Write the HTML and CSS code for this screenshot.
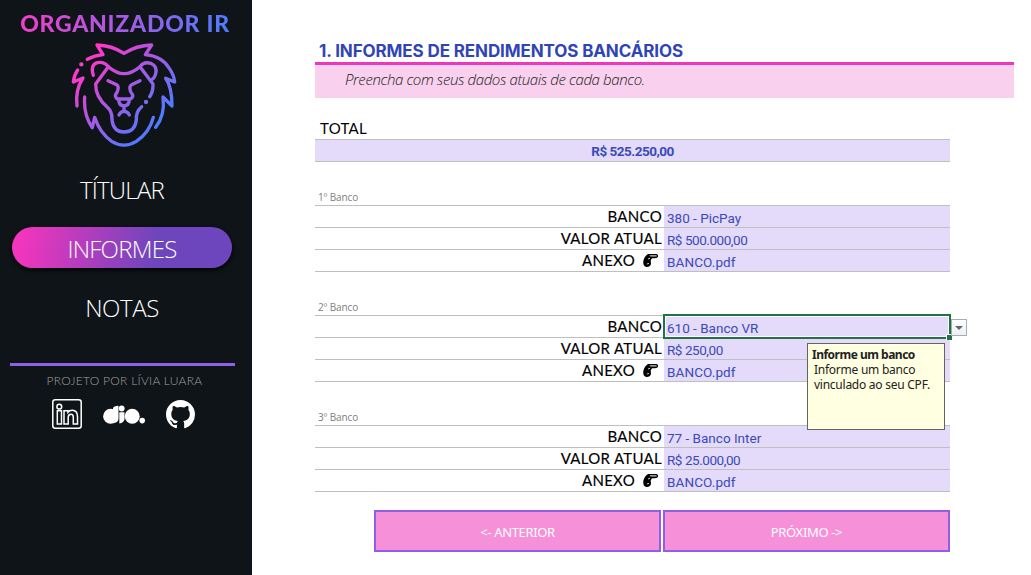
FILE: index.html
```html
<!DOCTYPE html>
<html lang="pt-BR">
<head>
<meta charset="utf-8">
<title>Organizador IR</title>
<link rel="stylesheet" href="styles.css">
</head>
<body>
<div class="app">
  <aside class="sidebar">
    <div class="brand">ORGANIZADOR IR</div>
    <svg class="lion" viewBox="204 114 336 336" fill="none" stroke="url(#mane)" stroke-width="10" stroke-linecap="round" stroke-linejoin="round">
      <defs>
        <linearGradient id="mane" gradientUnits="userSpaceOnUse" x1="265" y1="175" x2="475" y2="375">
          <stop offset="0" stop-color="#ff38c8"/>
          <stop offset=".5" stop-color="#a35be5"/>
          <stop offset="1" stop-color="#4b7dff"/>
        </linearGradient>
      </defs>
      <path d="M262 178Q284 166 309 164L291 135Q335 136 372 160Q410 136 455 135L436 164Q485 168 508 205Q522 225 524 246L497 235Q516 262 516 318L489 291Q496 345 467 382"/>
      <path d="M244 193h.1M438 306h.1" stroke-width="13"/>
      <path d="M233 210Q222 226 220 246L249 234Q225 270 231 318"/>
      <path d="M254 291Q250 345 277 383L284 352Q300 400 335 424Q372 447 409 424Q448 398 460 352"/>
      <path d="M280 226Q270 195 292 188Q312 184 325 200Q350 221 372 221Q395 221 420 200Q432 184 452 190Q475 200 466 225Q463 234 456 238"/>
      <path d="M325 200L287 252Q286 290 322 322Q337 335 336 360Q340 396 372 396Q405 396 409 360Q407 335 425 320M449 290Q460 275 459 252L420 200"/>
      <path d="M324 242L350 254Q356 258 354 268Q353 276 347 283Q344 290 352 297H392Q401 290 397 283Q390 276 390 268Q388 258 395 254L420 242"/>
      <path d="M357 298V306Q360 317 372 318Q384 317 387 306V298M372 318V334M357 345Q361 334 372 334Q384 334 388 345"/>
    </svg>
    <nav class="nav">
      <a class="nav-item nav-titular">TÍTULAR</a>
      <a class="nav-item nav-active">INFORMES</a>
      <a class="nav-item nav-notas">NOTAS</a>
    </nav>
    <div class="credit">PROJETO POR LÍVIA LUARA</div>
    <div class="social">
      <svg class="linkedin" viewBox="0 0 30 30" fill="none" stroke="#fff" stroke-width="1.5">
        <rect x=".8" y=".8" width="28.4" height="28.4" rx="2.5"/>
        <circle cx="7.3" cy="7.7" r="2.4"/>
        <path d="M5.3 11.7H9.5V25H5.3ZM12 11.7H16V13.2Q17.5 11.2 20.3 11.3Q25.5 11.5 25.5 17.5V25H21.3V18.2Q21.3 15.2 19 15.2Q16.2 15.2 16.2 18.5V25H12Z"/>
      </svg>
      <svg class="dio" viewBox="0 0 42 20" fill="#fff">
        <circle cx="7.6" cy="11.2" r="7.5"/>
        <path d="M10 3Q10.5 1 15.5.7V14Q15 18 10 18Z"/>
        <circle cx="18.7" cy="3.5" r="2.9"/>
        <path d="M16.3 7.2H21.5V14Q21 18 16.3 18.4Z"/>
        <circle cx="29.2" cy="11.2" r="7.5"/>
        <circle cx="39.2" cy="15.6" r="2.8"/>
      </svg>
      <svg class="github" viewBox="0 0 16 16" fill="#fff">
        <path d="M8 0C3.58 0 0 3.58 0 8c0 3.54 2.29 6.53 5.47 7.59.4.07.55-.17.55-.38v-1.49c-2.01.37-2.53-.49-2.69-.94-.09-.23-.48-.94-.82-1.13-.28-.15-.68-.52-.01-.53.63-.01 1.08.58 1.23.82.72 1.21 1.87.87 2.33.66.07-.52.28-.87.51-1.07-1.78-.2-3.64-.89-3.64-3.95 0-.87.31-1.59.82-2.15-.08-.2-.36-1.02.08-2.12 0 0 .67-.21 2.2.82a7.4 7.4 0 0 1 4 0c1.53-1.04 2.2-.82 2.2-.82.44 1.1.16 1.92.08 2.12.51.56.82 1.27.82 2.15 0 3.07-1.87 3.75-3.65 3.95.29.25.54.73.54 1.48v2.2c0 .21.15.46.55.38A8.01 8.01 0 0 0 16 8c0-4.42-3.58-8-8-8Z"/>
      </svg>
    </div>
  </aside>

  <svg width="0" height="0" class="symbols">
    <symbol id="hand" viewBox="0 0 16 15">
      <path d="M.8 8Q2 3 5.5 1H14Q16 1.5 15.6 3.4Q15 5.2 12.5 5.2H9.5L8.2 7.5L8.5 11Q7.5 14.3 3.8 14Q.2 13.3.8 8Z" fill="#000"/>
      <path d="M7 2.3H13.8Q14.7 2.8 14 3.6H8Z" fill="#ccc"/>
      <path d="M4.4 11L6.5 10.4M5.5 6L7.6 5.3" stroke="#ddd" stroke-width=".9"/>
    </symbol>
  </svg>

  <main class="sheet">
    <h1 class="heading">1. INFORMES DE RENDIMENTOS BANCÁRIOS</h1>
    <p class="hint">Preencha com seus dados atuais de cada banco.</p>
    <div class="total-label">TOTAL</div>
    <div class="total">R$ 525.250,00</div>

    <section class="bank">
      <h2 class="bank-name">1º Banco</h2>
      <div class="row"><span class="label">BANCO</span><span class="value">380 - PicPay</span></div>
      <div class="row"><span class="label">VALOR ATUAL</span><span class="value money">R$ 500.000,00</span></div>
      <div class="row"><span class="label">ANEXO<svg class="hand"><use href="#hand"/></svg></span><span class="value file">BANCO.pdf</span></div>
    </section>
    <section class="bank">
      <h2 class="bank-name">2º Banco</h2>
      <div class="row"><span class="label">BANCO</span><span class="value selected">610 - Banco VR
        <i class="frame"></i><i class="handle"></i>
        <button class="dropdown"><svg viewBox="0 0 8 4"><path d="M0 0H8L4 4Z" fill="#666"/></svg></button>
        <span class="tooltip"><b>Informe um banco</b><span>Informe um banco vinculado ao seu CPF.</span></span>
      </span></div>
      <div class="row"><span class="label">VALOR ATUAL</span><span class="value money">R$ 250,00</span></div>
      <div class="row"><span class="label">ANEXO<svg class="hand"><use href="#hand"/></svg></span><span class="value file">BANCO.pdf</span></div>
    </section>
    <section class="bank">
      <h2 class="bank-name">3º Banco</h2>
      <div class="row"><span class="label">BANCO</span><span class="value">77 - Banco Inter</span></div>
      <div class="row"><span class="label">VALOR ATUAL</span><span class="value money">R$ 25.000,00</span></div>
      <div class="row"><span class="label">ANEXO<svg class="hand"><use href="#hand"/></svg></span><span class="value file">BANCO.pdf</span></div>
    </section>

    <div class="pager">
      <button class="page-btn">&lt;- ANTERIOR</button>
      <button class="page-btn">PRÓXIMO -&gt;</button>
    </div>
  </main>
</div>
</body>
</html>
```
FILE: styles.css
```css
* { box-sizing: border-box; }
body { margin: 0; background: #fff; font-family: Roboto, sans-serif; }
.app { display: flex; width: 1031px; height: 575px; overflow: hidden; }

.sidebar {
  display: flex; flex-direction: column; align-items: center;
  width: 252px; flex: none; background: #0f1418; color: #fff;
}
.brand {
  margin: 9px 2px 0 0; height: 29px; white-space: nowrap;
  font: 900 23px/29px Lato, sans-serif; letter-spacing: .75px;
  background: linear-gradient(100deg, #f33fc8, #a35be5 50%, #4b7dff);
  -webkit-background-clip: text; background-clip: text; color: transparent;
}
.lion { width: 112px; height: 112px; margin-right: 4px; }
.nav {
  display: flex; flex-direction: column; gap: 18px; width: 220px;
  margin: 18px 8px 0 0;
}
.nav-item {
  height: 41px; line-height: 44px; text-align: center;
  font-family: "Open Sans", sans-serif; font-weight: 300; font-size: 24px;
}
.nav-titular { letter-spacing: -.75px; }
.nav-notas { letter-spacing: -.4px; }
.nav-active {
  letter-spacing: -.75px; border-radius: 21px;
  background: linear-gradient(100deg, #f235bd 5%, #6d46bd 65%);
  box-shadow: 0 2px 4px #000;
}
.credit {
  width: 225px; height: 36px; margin: 36px 7px 0 0; padding-left: 4px;
  border-top: 3px solid #8f5fe8;
  font: 300 12px/29px Lato, sans-serif; color: #a0a0a0;
  text-align: center; letter-spacing: .28px;
}
.social { display: flex; align-items: center; width: 143px; margin-right: 5px; }
.linkedin { width: 30px; height: 30px; }
.dio { width: 42px; height: 20px; margin: 2px 0 0 21px; }
.github { width: 29px; height: 29px; margin-left: 21px; }

.symbols { position: absolute; }
.sheet { flex: 1; padding: 0 17px 0 63px; }
.heading {
  margin: 0; height: 62px; padding: 40px 0 0 4px; white-space: nowrap;
  font: 700 17px/22px Inter, sans-serif; letter-spacing: -.11px; color: #2f45b5;
}
.hint {
  margin: 0; height: 36px; padding-left: 30px;
  background: #f9d1ee; border-top: 3px solid #ed37bd;
  font: italic 300 15px/29px "Open Sans", sans-serif; color: #222; letter-spacing: -.38px;
}
.total-label {
  height: 41px; padding: 20px 0 0 5px;
  font: 400 15px/21px Lato, sans-serif; color: #000; letter-spacing: .3px;
}
.total {
  width: 635px; height: 23px; background: #e4daf9;
  border-top: 1px solid #bfbfbf; border-bottom: 1px solid #bfbfbf;
  font-weight: 700; font-size: 13.5px; line-height: 22px; text-align: center;
  letter-spacing: -.5px; color: #3a4bb8;
}
.bank { width: 635px; height: 110px; }
.bank-name {
  margin: 0; height: 43px; padding: 28px 0 0 3px;
  font: 400 10px/14px "Open Sans", sans-serif; letter-spacing: -.1px; color: #808080;
}
.row {
  display: flex; height: 22px; border-top: 1px solid #bfbfbf;
}
.row:last-child { height: 23px; border-bottom: 1px solid #bfbfbf; }
.label {
  display: flex; justify-content: flex-end; align-items: center;
  width: 349px; padding-right: 2px;
  font: 400 15px/21px Lato, sans-serif; letter-spacing: .3px; color: #000;
  -webkit-text-stroke: .15px #000;
}
.hand { width: 17px; height: 15px; margin: 0 3px 0 7px; }
.value {
  width: 286px; padding: 2px 0 0 3px; background: #e4daf9;
  font-size: 13.5px; line-height: 21px; color: #3a4bb8; letter-spacing: 0;
}
.money { font-size: 13.5px; letter-spacing: -.45px; }
.file { letter-spacing: .1px; }
.selected { position: relative; }
.frame {
  position: absolute; left: -1px; top: -2px; width: 288px; height: 25px;
  border: 2px solid #217346; box-shadow: inset 0 0 0 1px #fff;
}
.handle {
  position: absolute; right: -2px; bottom: -3px; width: 6px; height: 6px;
  background: #217346; border: solid #fff; border-width: 1px 0 0 1px;
}
.dropdown {
  position: absolute; left: 287px; top: 3px; width: 16px; height: 17px;
  display: flex; align-items: center; justify-content: center;
  padding: 0; border: 1px solid #a6adb8; background: linear-gradient(#fff, #edf0f4);
}
.dropdown svg { width: 8px; height: 4px; }
.tooltip {
  position: absolute; z-index: 2; left: 143px; top: 27px; width: 138px; height: 87px;
  display: flex; flex-direction: column; padding: 4px;
  border: 1px solid #646464; background: #ffffe1; color: #222;
  font: 400 12px/15px "Noto Sans", sans-serif; letter-spacing: -.25px;
}
.tooltip b { line-height: 14px; letter-spacing: -.5px; white-space: nowrap; }
.tooltip span { padding-left: 2px; }
.pager { display: flex; gap: 2px; margin: 18px 0 0 59px; }
.page-btn {
  width: 287px; height: 42px; padding: 2px 0 0;
  border: 2px solid #8f5fe8; background: #f590d9; color: #fff;
  font: 400 13px/20px "Noto Sans", sans-serif; letter-spacing: -.35px;
}
```
